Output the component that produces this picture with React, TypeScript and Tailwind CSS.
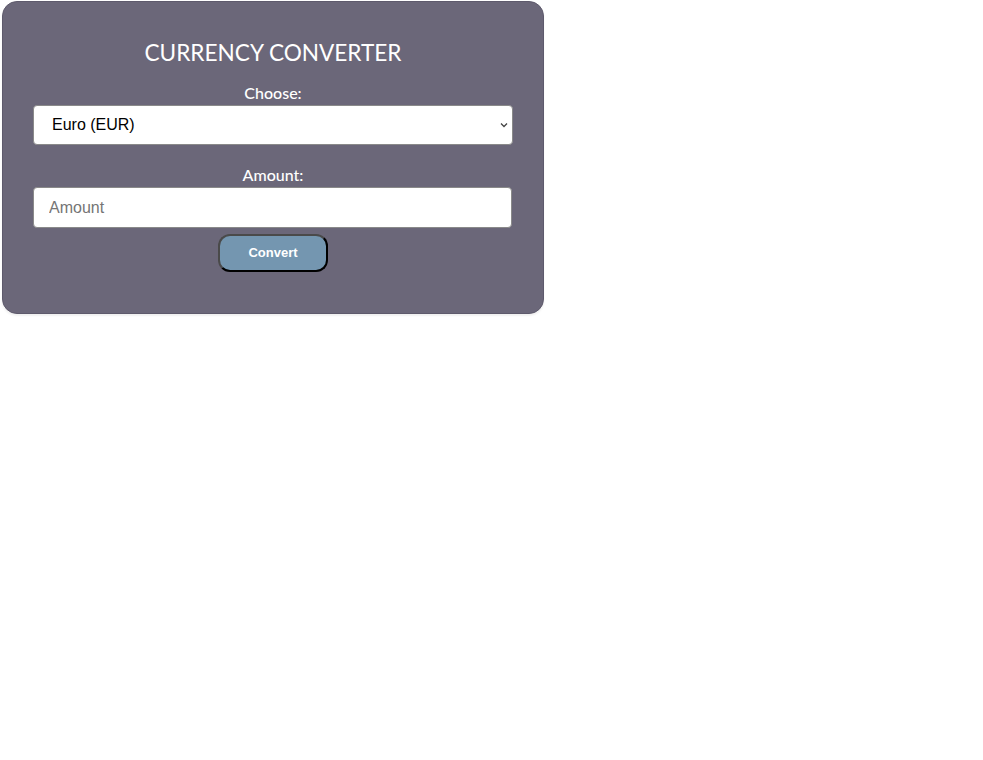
import { useState } from "react";

const currencies = [
    { code: "EUR", label: "Euro (EUR)" },
    { code: "USD", label: "US Dollar (USD)" },
    { code: "GBP", label: "British Pound (GBP)" },
];

export default function App() {
    const [currency, setCurrency] = useState("EUR");
    const [amount, setAmount] = useState("");

    return (
        <div className="min-h-screen bg-white">
            <div className="ml-[2px] mt-[1px] w-[542px] h-[313px] rounded-[15px] border border-[#5e5a6c] bg-[#6b6779] px-[30px] shadow-[0_2px_2px_rgba(0,0,0,0.06)] flex flex-col items-center">
                <h1 className="mt-[36px] text-[22.6px] leading-[30px] text-white font-['Lato',sans-serif]">
                    CURRENCY CONVERTER
                </h1>

                <label className="mt-[15px] text-[16px] leading-[20px] text-white font-medium font-['Lato',sans-serif]">
                    Choose:
                </label>
                <div className="relative mt-[2px] w-full">
                    <select
                        value={currency}
                        onChange={(e) => setCurrency(e.target.value)}
                        className="w-full h-[40px] appearance-none rounded-[4px] border border-[#8a8a8a] bg-white pl-[18px] text-[16px] text-black font-['Liberation_Sans',Arial,sans-serif] outline-none"
                    >
                        {currencies.map((c) => (
                            <option key={c.code} value={c.code}>{c.label}</option>
                        ))}
                    </select>
                    <svg className="pointer-events-none absolute right-[4px] top-[16px] h-[8px] w-[10px]" viewBox="0 0 10 8" fill="none">
                        <path d="M2 2.5 L5 5.5 L8 2.5" stroke="#444" strokeWidth="1.3" />
                    </svg>
                </div>

                <label className="mt-[20px] text-[16px] leading-[20px] text-white font-medium font-['Lato',sans-serif]">
                    Amount:
                </label>
                <input
                    value={amount}
                    onChange={(e) => setAmount(e.target.value)}
                    placeholder="Amount"
                    className="mt-[2px] w-[479px] self-start h-[41px] rounded-[4px] border border-[#8a8a8a] bg-white px-[15px] text-[16px] text-black placeholder:text-[#757575] font-['Liberation_Sans',Arial,sans-serif] outline-none"
                />

                <button className="mt-[6px] w-[110px] h-[38px] rounded-[12px] border-2 border-t-[#4a4a4a] border-l-[#4a4a4a] border-b-black border-r-black bg-[#7496b0] text-[13px] font-bold text-white font-['Liberation_Sans',Arial,sans-serif]">
                    Convert
                </button>
            </div>
        </div>
    );
}
